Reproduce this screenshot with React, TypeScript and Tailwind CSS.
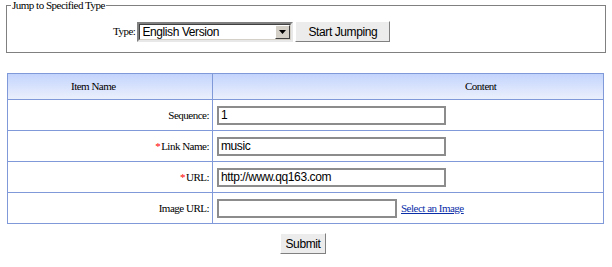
import React from "react";

const serif = "font-['Liberation_Serif',serif] text-[11px] tracking-[-0.5px] text-black";
const sans = "font-['Liberation_Sans',Arial,sans-serif] text-[12px] tracking-[-0.4px] text-black";

const rowCell = "border border-[#7f99d9] h-[31px]";

function TextBox({ value, width }: { value?: string; width: string }) {
  return (
    <div
      className={`${width} h-[19px] border-2 border-[#8c8c8c] bg-white flex items-center pl-[2px] ${sans}`}
    >
      {value}
    </div>
  );
}

function Button({ label, className }: { label: string; className: string }) {
  return (
    <button
      className={`${className} bg-[#ececec] border border-t-white border-l-white border-r-[#808080] border-b-[#808080] ${sans}`}
    >
      {label}
    </button>
  );
}

function Required() {
  return <span className="text-[#ff0000] mr-[1px]">*</span>;
}

export default function App() {
  const rows = [
    { label: "Sequence:", value: "1" },
    { label: "Link Name:", value: "music", required: true },
    { label: "URL:", value: "http://www.qq163.com", required: true },
  ];

  return (
    <div className="w-[612px] h-[267px] bg-white">
      <fieldset className="mx-[6px] border border-[#808080] pt-[11px] pb-[10px]">
        <legend className={`${serif} ml-[4px] px-[1px] leading-[10px]`}>Jump to Specified Type</legend>
        <div className="flex items-center pl-[106px] h-[21px]">
          <span className={serif}>Type:</span>
          <div className="ml-[2px] w-[156px] h-[20px] flex border-2 border-t-[#808080] border-l-[#808080] border-b-[#e8e8e8] border-r-[#e8e8e8]">
            <div className="flex-1 flex border border-t-[#404040] border-l-[#404040] border-b-[#d4d0c8] border-r-[#d4d0c8] bg-white">
              <span className={`flex-1 flex items-center pl-[2px] ${sans}`}>English Version</span>
              <div className="w-[15px] h-full bg-[#d4d0c8] border border-t-white border-l-white border-r-[#404040] border-b-[#404040] flex items-center justify-center">
                <svg width="7" height="4" viewBox="0 0 7 4">
                  <path d="M0 0h7L3.5 4z" fill="#000" />
                </svg>
              </div>
            </div>
          </div>
          <Button label="Start Jumping" className="ml-[2px] w-[95px] h-[21px]" />
        </div>
      </fieldset>

      <table className="mt-[20px] ml-[7px] w-[597px] border-collapse border border-[#7f99d9]">
        <thead>
          <tr className="h-[26px] bg-gradient-to-b from-[#c3d4fc] to-[#edf1fc]">
            <th className={`w-[205px] border border-[#7f99d9] text-left pl-[63px] font-normal ${serif}`}>
              Item Name
            </th>
            <th className={`border border-[#7f99d9] text-left pl-[252px] font-normal ${serif}`}>Content</th>
          </tr>
        </thead>
        <tbody>
          {rows.map((r) => (
            <tr key={r.label}>
              <td className={`${rowCell} text-right pr-[3px] ${serif}`}>
                {r.required && <Required />}
                {r.label}
              </td>
              <td className={`${rowCell} pl-[4px]`}>
                <TextBox value={r.value} width="w-[229px]" />
              </td>
            </tr>
          ))}
          <tr>
            <td className={`${rowCell} text-right pr-[3px] ${serif}`}>Image URL:</td>
            <td className={`${rowCell} pl-[4px]`}>
              <div className="flex items-center">
                <TextBox width="w-[180px]" />
                <a href="#" className={`ml-[4px] underline !text-[#0a2ea8] ${serif}`}>
                  Select an Image
                </a>
              </div>
            </td>
          </tr>
        </tbody>
      </table>

      <div className="flex justify-center pr-[6px] mt-[9px]">
        <Button label="Submit" className="w-[46px] h-[21px]" />
      </div>
    </div>
  );
}
